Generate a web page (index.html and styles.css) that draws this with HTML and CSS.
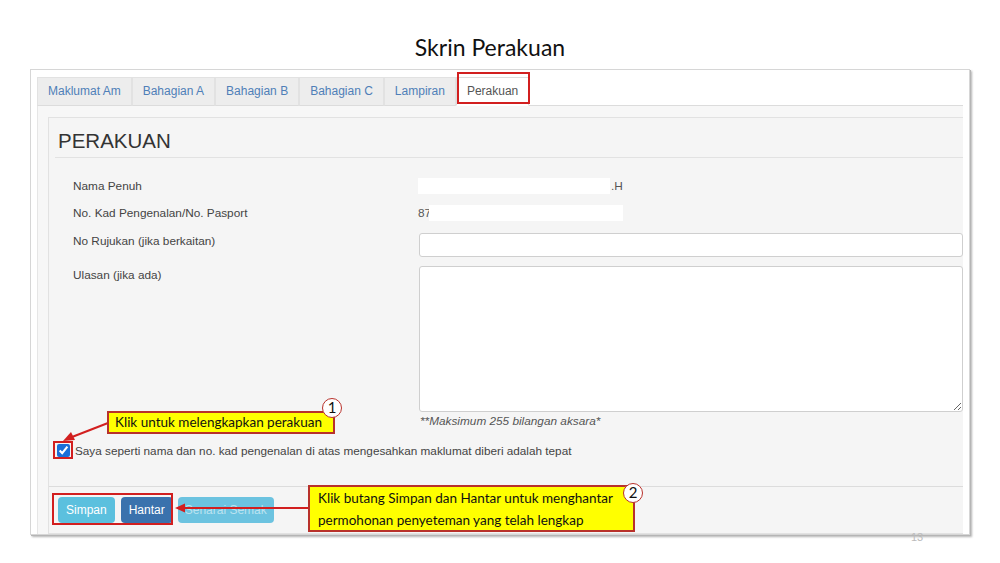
FILE: index.html
```html
<!DOCTYPE html>
<html lang="ms">
<head>
    <meta charset="UTF-8">
    <title>Skrin Perakuan</title>
    <link rel="stylesheet" href="styles.css">
</head>
<body>
    <div class="slide">
        <h1 class="slide-title">Skrin Perakuan</h1>

        <div class="frame">
            <ul class="tabs">
                <li class="tab">Maklumat Am</li>
                <li class="tab">Bahagian A</li>
                <li class="tab">Bahagian B</li>
                <li class="tab">Bahagian C</li>
                <li class="tab">Lampiran</li>
                <li class="tab active">Perakuan</li>
            </ul>
            <div class="tab-content">
                <div class="panel">
                    <div class="panel-body">
                        <h2 class="panel-heading">PERAKUAN</h2>
                        <div class="form">
                            <div class="row r-text">
                                <label>Nama Penuh</label>
                                <div class="value"><span class="mask m-name"></span>.H</div>
                            </div>
                            <div class="row r-text">
                                <label>No. Kad Pengenalan/No. Pasport</label>
                                <div class="value">87<span class="mask m-ic"></span></div>
                            </div>
                            <div class="row r-input">
                                <label>No Rujukan (jika berkaitan)</label>
                                <div class="value"><input type="text" class="control"></div>
                            </div>
                            <div class="row r-area">
                                <label>Ulasan (jika ada)</label>
                                <div class="value"><textarea class="control area"></textarea></div>
                            </div>
                            <div class="row r-help">
                                <span></span>
                                <div class="help">**Maksimum 255 bilangan aksara*</div>
                            </div>
                        </div>
                        <div class="check-row">
                            <input type="checkbox" checked>
                            <span>Saya seperti nama dan no. kad pengenalan di atas mengesahkan maklumat diberi adalah tepat</span>
                        </div>
                    </div>
                    <div class="panel-footer">
                        <button type="button" class="btn btn-info">Simpan</button>
                        <button type="button" class="btn btn-primary">Hantar</button>
                        <button type="button" class="btn btn-info faded">Senarai Semak</button>
                    </div>
                </div>
            </div>
        </div>

        <!-- annotations drawn over the screenshot -->
        <div class="mark mark-check"></div>
        <div class="mark mark-btns"></div>

        <svg class="arrows" width="1000" height="563" viewBox="0 0 1000 563">
            <line x1="108" y1="423" x2="72" y2="437" stroke="#d21f1f" stroke-width="2"/>
            <polygon points="63,441 71,432 75,440" fill="#d21f1f"/>
            <line x1="308" y1="508" x2="184" y2="508" stroke="#d21f1f" stroke-width="2"/>
            <polygon points="175,508 185,503.5 185,512.5" fill="#d21f1f"/>
        </svg>

        <div class="callout c-one">Klik untuk melengkapkan perakuan</div>
        <div class="num n-one">1</div>

        <div class="callout c-two">Klik butang Simpan dan Hantar untuk menghantar<br>permohonan penyeteman yang telah lengkap</div>
        <div class="num n-two">2</div>

        <div class="page-no">13</div>
    </div>
</body>
</html>
```

FILE: styles.css
```css
body {
    margin: 0;
    background: #fff;
    font-family: "Liberation Sans", Arial, sans-serif;
}
.slide {
    position: relative;
    width: 1000px;
    height: 563px;
    overflow: hidden;
}
.slide-title {
    margin: 0 0 10px 0;
    padding: 35px 20px 0 0;
    height: 24px;
    line-height: 24px;
    text-align: center;
    font-family: Lato, "Open Sans", sans-serif;
    font-weight: normal;
    font-size: 23px;
    color: #111;
}

/* screenshot frame */
.frame {
    margin-left: 30px;
    width: 926px;
    height: 457px;
    padding: 7px 6px 0 6px;
    background: #fff;
    border: 1px solid #d6d6d6;
    box-shadow: 1px 1px 0 #b5b5b5, 2px 2px 2px rgba(0, 0, 0, .3);
    overflow: hidden;
}
.tabs {
    display: flex;
    margin: 0;
    padding: 0;
    list-style: none;
    border-bottom: 1px solid #dcdcdc;
}
.tab {
    position: relative;
    height: 27px;
    line-height: 27px;
    padding: 0 10px;
    margin: 0 0 -1px 0;
    font-size: 12px;
    color: #4f7fb8;
    background: #ededed;
    border: 1px solid #e2e2e2;
    border-bottom-color: #dcdcdc;
}
.tab.active {
    color: #555;
    background: #fff;
    border-color: #ddd;
    border-bottom-color: #fff;
}
.tab.active::after {
    content: "";
    position: absolute;
    top: -6px;
    left: 0;
    right: -2px;
    bottom: 1px;
    border: 2px solid #d21f1f;
}
.tab-content {
    background: #f7f7f7;
    border-left: 1px solid #e6e6e6;
    padding: 11px 0 0 10px;
}
.panel {
    background: #f5f5f5;
    border: 1px solid #e2e2e2;
    border-right: 0;
}
.panel-body {
    padding: 0 0 27px 0;
}
.panel-heading {
    margin: 0 0 0 6px;
    padding: 11px 0 4px 3px;
    line-height: 24px;
    font-size: 20.5px;
    font-weight: normal;
    color: #333;
    border-bottom: 1px solid #e2e2e2;
}
.form {
    padding: 16px 0 0 24px;
    font-size: 11.8px;
    color: #444;
}
.row {
    display: grid;
    grid-template-columns: 345px 1fr;
    margin-top: 3px;
}
.row label {
    line-height: 16px;
}
.r-text {
    height: 24px;
    align-items: center;
}
.r-text:first-child {
    margin-top: 0;
}
.r-input {
    margin-top: 8px;
}
.r-area {
    margin-top: 9px;
}
.r-area label {
    line-height: 18px;
}
.r-help {
    margin-top: 1px;
}
.value {
    display: flex;
    align-items: center;
}
.mask {
    display: inline-block;
    height: 16px;
    background: #fff;
}
.m-name {
    width: 192px;
    margin-right: 1px;
}
.m-ic {
    width: 194px;
    margin-left: -2px;
}
.r-text .value:last-child {
    color: #555;
}
.control {
    box-sizing: border-box;
    width: 100%;
    margin: 0 0 0 1px;
    border: 1px solid #cfcfcf;
    border-radius: 3px;
    background: #fff;
    font: 12px "Liberation Sans", Arial, sans-serif;
}
input.control {
    height: 24px;
}
.area {
    display: block;
    height: 146px;
    resize: vertical;
}
.help {
    padding-left: 2px;
    line-height: 16px;
    font-style: italic;
    color: #555;
}
.check-row {
    display: flex;
    align-items: center;
    margin-top: 12px;
    padding-left: 8px;
    height: 18px;
    font-size: 11.75px;
    color: #444;
}
.check-row input {
    width: 13px;
    height: 13px;
    margin: 0 5px 0 0;
    accent-color: #1a6fd8;
}
.panel-footer {
    display: flex;
    gap: 6px;
    padding: 10px 9px;
    background: #f5f5f5;
    border-top: 1px solid #dcdcdc;
}
.btn {
    height: 26px;
    padding: 0 8px;
    border: none;
    border-radius: 4px;
    font: 12px "Liberation Sans", Arial, sans-serif;
    color: #fff;
}
.btn-info {
    background: #5bc0de;
}
.btn-primary {
    background: #3a72ad;
}
.faded {
    margin-left: -1px;
    padding: 0 7px;
    color: rgba(255, 255, 255, .55);
    background: #6cc3e0;
}

/* annotations */
.mark {
    position: absolute;
    border: 2px solid #d21f1f;
}
.mark-check {
    left: 53px;
    top: 441px;
    width: 16px;
    height: 14px;
}
.mark-btns {
    left: 52px;
    top: 493px;
    width: 117px;
    height: 28px;
}
.arrows {
    position: absolute;
    left: 0;
    top: 0;
}
.callout {
    position: absolute;
    box-sizing: border-box;
    background: #ffff00;
    border: 2px solid #b8312b;
    font-family: Lato, "Open Sans", sans-serif;
    font-size: 13.5px;
    color: #111;
}
.c-one {
    left: 107px;
    top: 411px;
    width: 228px;
    height: 23px;
    line-height: 19px;
    padding-left: 6px;
}
.c-two {
    left: 308px;
    top: 485px;
    width: 327px;
    height: 47px;
    line-height: 22px;
    padding: 0 0 0 8px;
}
.num {
    position: absolute;
    box-sizing: border-box;
    width: 20px;
    height: 20px;
    border: 1.5px solid #b8312b;
    border-radius: 50%;
    background: #fff;
    text-align: center;
    line-height: 17px;
    font-family: Lato, "Open Sans", sans-serif;
    font-size: 15px;
    color: #111;
}
.n-one {
    left: 322px;
    top: 398px;
}
.n-two {
    left: 623px;
    top: 483px;
}
.page-no {
    position: absolute;
    left: 911px;
    top: 531px;
    font-size: 11px;
    color: #bbb;
}
```
